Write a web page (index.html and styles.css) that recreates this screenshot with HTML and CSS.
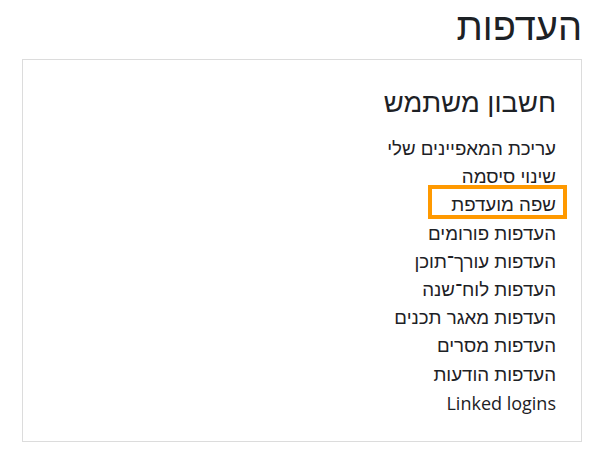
FILE: index.html
```html
<!DOCTYPE html>
<html lang="he" dir="rtl">
<head>
  <meta charset="UTF-8">
  <title>העדפות</title>
  <link rel="stylesheet" href="styles.css">
</head>
<body>
  <div class="page">
    <h1 class="page-title">העדפות</h1>
    <div class="card">
      <h3 class="card-title">חשבון משתמש</h3>
      <ul class="links">
        <li><a href="#">עריכת המאפיינים שלי</a></li>
        <li><a href="#">שינוי סיסמה</a></li>
        <li><a href="#" class="marked">שפה מועדפת</a></li>
        <li><a href="#">העדפות פורומים</a></li>
        <li><a href="#">העדפות עורך־תוכן</a></li>
        <li><a href="#">העדפות לוח־שנה</a></li>
        <li><a href="#">העדפות מאגר תכנים</a></li>
        <li><a href="#">העדפות מסרים</a></li>
        <li><a href="#">העדפות הודעות</a></li>
        <li><a href="#" class="latin" lang="en">Linked logins</a></li>
      </ul>
    </div>
  </div>
</body>
</html>
```
FILE: styles.css
```css
body {
  margin: 0;
  background: #fff;
  color: #1d2125;
  font-family: "Liberation Sans", "Open Sans", sans-serif;
}

.page {
  padding: 0 25px 0 22px;
}

.page-title {
  margin: 0;
  padding-top: 5px;
  height: 54px;
  font-size: 38px;
  font-weight: 400;
  line-height: 44px;
}

.card {
  border: 1px solid #dcdcdc;
  padding: 25px 25px 21px;
}

.card-title {
  margin: 0 0 14px;
  font-size: 27.4px;
  font-weight: 400;
  line-height: 36px;
}

.links {
  list-style: none;
  margin: 0;
  padding: 0;
}

.links li {
  font-size: 18.7px;
  line-height: 28.2px;
}

.links a {
  color: #1d2125;
  text-decoration: none;
}

.links a.latin {
  font-family: "Open Sans", sans-serif;
  font-size: 18px;
  vertical-align: 2px;
}

/* highlight frame drawn over the link */
.links a.marked {
  position: relative;
}

.links a.marked::after {
  content: "";
  position: absolute;
  top: -9px;
  bottom: -4px;
  left: -23px;
  right: -11px;
  border: 4px solid #ff9900;
}
```
